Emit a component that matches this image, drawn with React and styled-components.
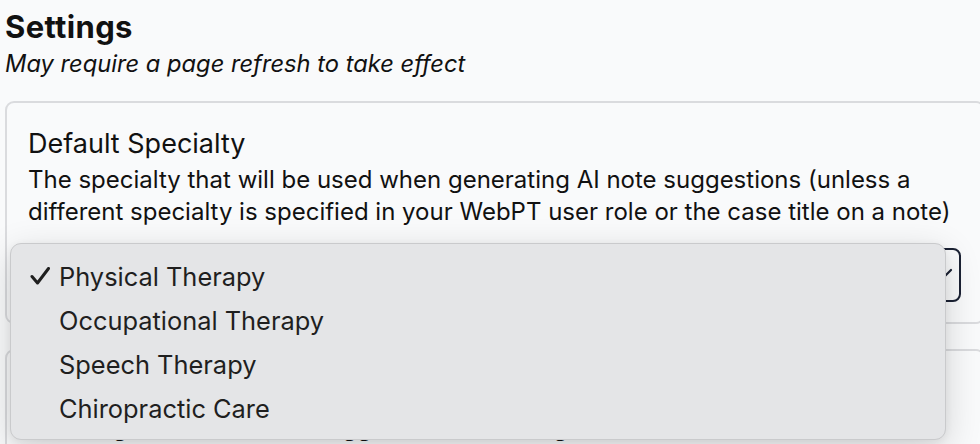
import React from 'react';
import styled, { createGlobalStyle } from 'styled-components';

const GlobalStyle = createGlobalStyle`
  html, body {
    margin: 0;
    padding: 0;
    background: #f9fafb;
    overflow: hidden;
  }
  body {
    font-family: 'Inter', 'Liberation Sans', sans-serif;
    color: #111;
  }
`;

const specialties = [
  'Physical Therapy',
  'Occupational Therapy',
  'Speech Therapy',
  'Chiropractic Care',
];

function Settings() {
  const selected = 'Physical Therapy';

  return (
    <>
      <GlobalStyle />
      <Page>
        <Heading>Settings</Heading>
        <Subtitle>May require a page refresh to take effect</Subtitle>

        <Card>
          <CardTitle>Default Specialty</CardTitle>
          <CardText>
            The specialty that will be used when generating AI note suggestions (unless a
            different specialty is specified in your WebPT user role or the case title on a note)
          </CardText>
          <SelectWrap>
            <SelectBox>
              <SelectValue>{selected}</SelectValue>
              <Chevron width="24" height="14" viewBox="0 0 24 14">
                <path d="M2 2 L12 12 L22 2" />
              </Chevron>
            </SelectBox>
            <Menu>
              {specialties.map((s) => (
                <MenuItem key={s}>
                  <CheckSlot>
                    {s === selected && (
                      <svg width="20" height="18" viewBox="0 0 20 18">
                        <path d="M2 9.5 L7.5 16 L18.5 1.5" />
                      </svg>
                    )}
                  </CheckSlot>
                  {s}
                </MenuItem>
              ))}
            </Menu>
          </SelectWrap>
        </Card>

        <Card>
          <CardTitle>Default Note Length</CardTitle>
          <CardText>
            The length of the AI note suggestions that are generated for a note
          </CardText>
        </Card>
      </Page>
    </>
  );
}

const Page = styled.div`
  padding: 9px 0 0 5px;
  width: 980px;
`;

const Heading = styled.h1`
  margin: 0;
  font-size: 31px;
  line-height: 36px;
  font-weight: 700;
  letter-spacing: 0.35px;
`;

const Subtitle = styled.p`
  margin: 4px 0 0;
  font-size: 23.7px;
  line-height: 30px;
  font-style: italic;
`;

const Card = styled.section`
  margin-top: 22px;
  border: 2px solid #dadbde;
  border-radius: 9px;
  background: #f9fafb;
  padding: 23px 22px 20px 21px;

  & + & {
    margin-top: 25px;
  }
`;

const CardTitle = styled.h2`
  margin: 0;
  font-size: 27px;
  line-height: 36px;
  font-weight: 400;
`;

const CardText = styled.p`
  margin: 2px 0 0;
  font-size: 24px;
  line-height: 32px;
`;

const SelectWrap = styled.div`
  position: relative;
  margin-top: 20px;
`;

const SelectBox = styled.div`
  height: 54px;
  box-sizing: border-box;
  border: 2px solid #1b2234;
  border-radius: 8px;
  display: flex;
  align-items: center;
  justify-content: space-between;
  padding: 0 6px 0 14px;
  font-size: 24px;
`;

const SelectValue = styled.span``;

const Chevron = styled.svg`
  fill: none;
  stroke: #1b2234;
  stroke-width: 2.2;
  stroke-linecap: round;
  stroke-linejoin: round;
`;

const Menu = styled.ul`
  position: absolute;
  left: -18px;
  top: -5px;
  width: 936px;
  margin: 0;
  padding: 10px 0 9px;
  list-style: none;
  box-sizing: border-box;
  background: #e4e5e7;
  border: 1px solid #c9cacc;
  border-radius: 11px;
  box-shadow: 0 10px 36px rgba(0, 0, 0, 0.16), 0 2px 8px rgba(0, 0, 0, 0.06);
  z-index: 10;
`;

const MenuItem = styled.li`
  display: flex;
  align-items: center;
  height: 44px;
  font-size: 25.4px;
  color: #1f1f1f;
  padding-left: 19px;
`;

const CheckSlot = styled.span`
  display: inline-flex;
  width: 29px;
  svg {
    fill: none;
    stroke: #1f1f1f;
    stroke-width: 3;
    stroke-linecap: round;
    stroke-linejoin: round;
  }
`;

export default Settings;
